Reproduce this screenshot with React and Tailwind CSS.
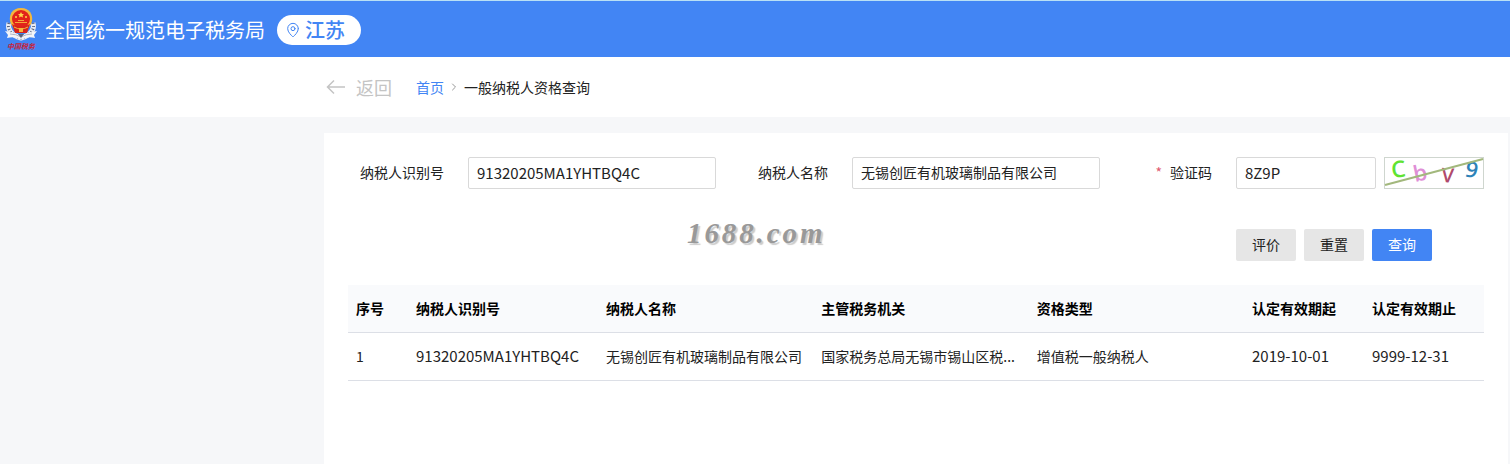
import React, { useState } from 'react';
import { ChevronRight, MapPin } from 'lucide-react';

const COLUMNS = [
  { key: 'index', label: '序号', width: 'w-[60px]' },
  { key: 'taxId', label: '纳税人识别号', width: 'w-[190px]', latin: true },
  { key: 'name', label: '纳税人名称', width: '' },
  { key: 'office', label: '主管税务机关', width: '' },
  { key: 'type', label: '资格类型', width: '' },
  { key: 'from', label: '认定有效期起', width: 'w-[120px]', latin: true },
  { key: 'to', label: '认定有效期止', width: 'w-[120px]', latin: true },
];

const ROWS = [
  {
    index: '1',
    taxId: '91320205MA1YHTBQ4C',
    name: '无锡创匠有机玻璃制品有限公司',
    office: '国家税务总局无锡市锡山区税...',
    type: '增值税一般纳税人',
    from: '2019-10-01',
    to: '9999-12-31',
  },
];

const INPUT = 'h-8 min-w-0 flex-1 rounded-xs border border-[#d9d9d9] bg-white px-2 pb-0.5 text-[#222] outline-none focus:border-[#4285f4]';
const BUTTON = 'h-8 w-[60px] rounded-xs pb-0.5';

const Emblem = () => (
  <svg className="h-[44px] w-[34px] shrink-0" viewBox="0 0 34 44" aria-hidden="true">
    {/* wheat and ribbon */}
    <path d="M5 15C3 21 7 27 17 30C27 27 31 21 29 15" fill="none" stroke="#e8ebf2" strokeWidth="5" />
    <path d="M5 15C3 21 7 27 17 30C27 27 31 21 29 15" fill="none" stroke="#5b6580" strokeWidth="3" strokeDasharray="1 2" />
    <path d="M1 23Q9 24 17 28Q25 24 33 23L30 27L31 30Q24 28 17 31Q10 28 3 30L4 27Z" fill="#f4f5f8" />
    <path d="M6 26Q12 26 17 29Q22 26 28 26" fill="none" stroke="#b3b8c6" strokeWidth="1" />
    <path d="M14 26H20L17 30Z" fill="#59617a" />
    {/* national emblem */}
    <path d="M17 0C8 0 5 7 6 13C7 18 11 22 17 22C23 22 27 18 28 13C29 7 26 0 17 0Z" fill="#f5b73b" />
    <circle cx="17" cy="11" r="9" fill="#e2231a" />
    <path d="M17 4L18 6H20L18.500 7.500L19 9.500L17 8.500L15 9.500L15.500 7.500L14 6H16Z" fill="#ffd54a" />
    <circle cx="12" cy="9" r="1" fill="#ffd54a" />
    <circle cx="22" cy="9" r="1" fill="#ffd54a" />
    <path d="M11 14H23V15H11ZM14 12H20V13H14Z" fill="#f5a83b" />
    <path d="M8 16Q17 21 26 16L23 25H11Z" fill="#d8241b" />
    <path d="M10 19Q17 23 24 19" fill="none" stroke="#f5b73b" strokeWidth="1" />
    <path d="M15 20H19V24H15Z" fill="#f5b73b" />
    <text x="3" y="41" fontSize="7" fontWeight="700" fontStyle="italic" fill="#c8233a">中国税务</text>
  </svg>
);

const Captcha = () => (
  <svg
    className="h-8 w-[100px] shrink-0 overflow-visible border border-[#cfd6cf] bg-white"
    viewBox="0 0 98 30"
    role="img"
    aria-label="验证码图片"
    fontFamily="'Open Sans', 'Noto Sans', sans-serif"
  >
    <text transform="translate(7 20) rotate(-6)" fontSize="23" fontWeight="600" fill="#5fe332">C</text>
    <text transform="translate(30 24) rotate(-12)" fontSize="22" fontWeight="600" fill="#df8fd6">b</text>
    <text transform="translate(56 24) rotate(4)" fontSize="20" fontWeight="600" fill="#b04a6c">V</text>
    <text transform="translate(79 18) rotate(12)" fontSize="22" fontWeight="600" fill="#2c82b8">9</text>
    <path d="M0 27L98 1" stroke="#a2b87c" strokeWidth="2" />
  </svg>
);

const Field = ({ id, label, required, children }) => (
  <div className="flex items-center">
    <label htmlFor={id} className="w-[120px] shrink-0 pr-6 pb-0.5 text-right whitespace-nowrap">
      {required && <span className="mr-2 text-[#e05a70]">*</span>}
      {label}
    </label>
    {children}
  </div>
);

const App = () => {
  const [form, setForm] = useState({
    taxId: '91320205MA1YHTBQ4C',
    name: '无锡创匠有机玻璃制品有限公司',
    code: '8Z9P',
  });

  const handleChange = (e) => setForm({ ...form, [e.target.name]: e.target.value });
  const handleReset = () => setForm({ taxId: '', name: '', code: '' });

  return (
    <div className="flex min-h-screen flex-col bg-[#f6f7f9] font-['Noto_Sans_CJK_SC','Noto_Sans',sans-serif] text-sm text-[#222]">
      {/* Header */}
      <header className="flex h-[57px] items-center border-t border-[#b9e0f5] bg-[#4285f4] pt-0.5 pl-1">
        <Emblem />
        <h1 className="ml-[7px] text-xl whitespace-nowrap text-white">全国统一规范电子税务局</h1>
        <button type="button" className="ml-3 flex h-[30px] items-center gap-1 rounded-full bg-white pr-4 pl-2 text-xl font-medium text-[#4285f4]">
          <MapPin className="size-4" strokeWidth={1.5} />
          江苏
        </button>
      </header>

      {/* Breadcrumb */}
      <nav className="flex h-[60px] items-center bg-white pl-[326px] whitespace-nowrap">
        <button type="button" className="flex items-center gap-2.5 text-lg text-[#c4c4c4]">
          <svg className="h-4 w-5" viewBox="0 0 20 16" fill="none" stroke="currentColor" strokeWidth="1.500">
            <path d="M19 8H2M8 1.500L1.500 8L8 14.500" />
          </svg>
          返回
        </button>
        <a href="#" className="ml-6 text-[#4285f4]">首页</a>
        <ChevronRight className="mx-1 size-3 text-[#999]" />
        <span>一般纳税人资格查询</span>
      </nav>

      {/* Content */}
      <main className="relative mt-4 mr-0.5 ml-[324px] flex-1 bg-white p-6">
        <form className="grid grid-cols-3 gap-x-4 gap-y-10" onSubmit={(e) => e.preventDefault()}>
          <Field id="taxId" label="纳税人识别号">
            <input id="taxId" name="taxId" value={form.taxId} onChange={handleChange} className={`${INPUT} text-[15px]`} />
          </Field>
          <Field id="name" label="纳税人名称">
            <input id="name" name="name" value={form.name} onChange={handleChange} className={INPUT} />
          </Field>
          <Field id="code" label="验证码" required>
            <div className="flex min-w-0 flex-1 gap-2">
              <input id="code" name="code" value={form.code} onChange={handleChange} className={`${INPUT} text-[15px]`} />
              <Captcha />
            </div>
          </Field>
          <div className="col-start-3 flex gap-2 pl-[120px]">
            <button type="button" className={`${BUTTON} bg-[#e6e6e6]`}>评价</button>
            <button type="button" onClick={handleReset} className={`${BUTTON} bg-[#e6e6e6]`}>重置</button>
            <button type="submit" className={`${BUTTON} bg-[#4285f4] text-white`}>查询</button>
          </div>
        </form>

        <table className="mt-6 w-full table-fixed text-left">
          <thead>
            <tr className="h-[47px] border-b border-[#dcdfe6] bg-[#f9fafc] text-black">
              {COLUMNS.map(col => (
                <th key={col.key} className={`px-2 font-bold whitespace-nowrap ${col.width}`}>{col.label}</th>
              ))}
            </tr>
          </thead>
          <tbody>
            {ROWS.map(row => (
              <tr key={row.index} className="h-12 border-b border-[#dcdfe6]">
                {COLUMNS.map(col => (
                  <td key={col.key} className={`truncate px-2 ${col.latin ? 'text-[15px]' : ''}`}>{row[col.key]}</td>
                ))}
              </tr>
            ))}
          </tbody>
        </table>

        {/* Watermark */}
        <span className="pointer-events-none absolute top-[84px] left-[363px] font-['Liberation_Serif',serif] text-[29px] leading-8 font-bold tracking-widest text-[#999] italic [text-shadow:2px_2px_1px_#ccc]">
          1688.com
        </span>
      </main>
    </div>
  );
};

export default App;
